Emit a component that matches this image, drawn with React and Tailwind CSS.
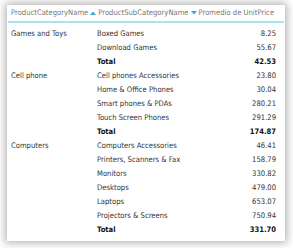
const groups = [
  {
    category: "Games and Toys",
    items: [
      ["Boxed Games", "8.25"],
      ["Download Games", "55.67"],
    ],
    total: "42.53",
  },
  {
    category: "Cell phone",
    items: [
      ["Cell phones Accessories", "23.80"],
      ["Home & Office Phones", "30.04"],
      ["Smart phones & PDAs", "280.21"],
      ["Touch Screen Phones", "291.29"],
    ],
    total: "174.87",
  },
  {
    category: "Computers",
    items: [
      ["Computers Accessories", "46.41"],
      ["Printers, Scanners & Fax", "158.79"],
      ["Monitors", "330.82"],
      ["Desktops", "479.00"],
      ["Laptops", "653.07"],
      ["Projectors & Screens", "750.94"],
    ],
    total: "331.70",
  },
];

function SortUp() {
  return (
    <svg width="6" height="4" viewBox="0 0 6 4" className="mx-[2px]">
      <path d="M0 4 L3 0.5 L6 4 Z" fill="#3aa9dc" />
    </svg>
  );
}

function SortDown() {
  return (
    <svg width="6" height="4" viewBox="0 0 6 4" className="mx-[2px]">
      <path d="M0 0 L6 0 L3 3.5 Z" fill="#3aa9dc" />
    </svg>
  );
}

function App() {
  return (
    <div className="w-[293px] h-[248px] bg-white pt-[5px] pl-[7px] overflow-hidden">
      <div
        className="w-[278px] h-[236px] bg-white overflow-hidden shadow-[0_0_8px_2px_rgba(0,0,0,0.3)] text-[7.6px] text-[#333]"
        style={{ fontFamily: '"DejaVu Sans Condensed", "DejaVu Sans", sans-serif' }}
      >
        <div className="h-[18px] mx-[1px] flex items-center pl-[3px] text-[#777] border-b-[2px] border-[#a9e2f5]">
          <span>ProductCategoryName</span>
          <SortUp />
          <span>ProductSubCategoryName</span>
          <SortDown />
          <span>Promedio de UnitPrice</span>
        </div>

        <div className="pt-[4px] pl-[4px] pr-[9px]">
          {groups.map((g) => (
            <div key={g.category}>
              {g.items.map(([name, val], i) => (
                <div key={name} className="grid grid-cols-[86px_1fr_60px] h-[14px] items-center">
                  <span>{i === 0 ? g.category : ""}</span>
                  <span>{name}</span>
                  <span className="text-right">{val}</span>
                </div>
              ))}
              <div className="grid grid-cols-[86px_1fr_60px] h-[14px] items-center font-bold text-[#111]">
                <span></span>
                <span>Total</span>
                <span className="text-right">{g.total}</span>
              </div>
            </div>
          ))}
        </div>
      </div>
    </div>
  );
}

export default App;
